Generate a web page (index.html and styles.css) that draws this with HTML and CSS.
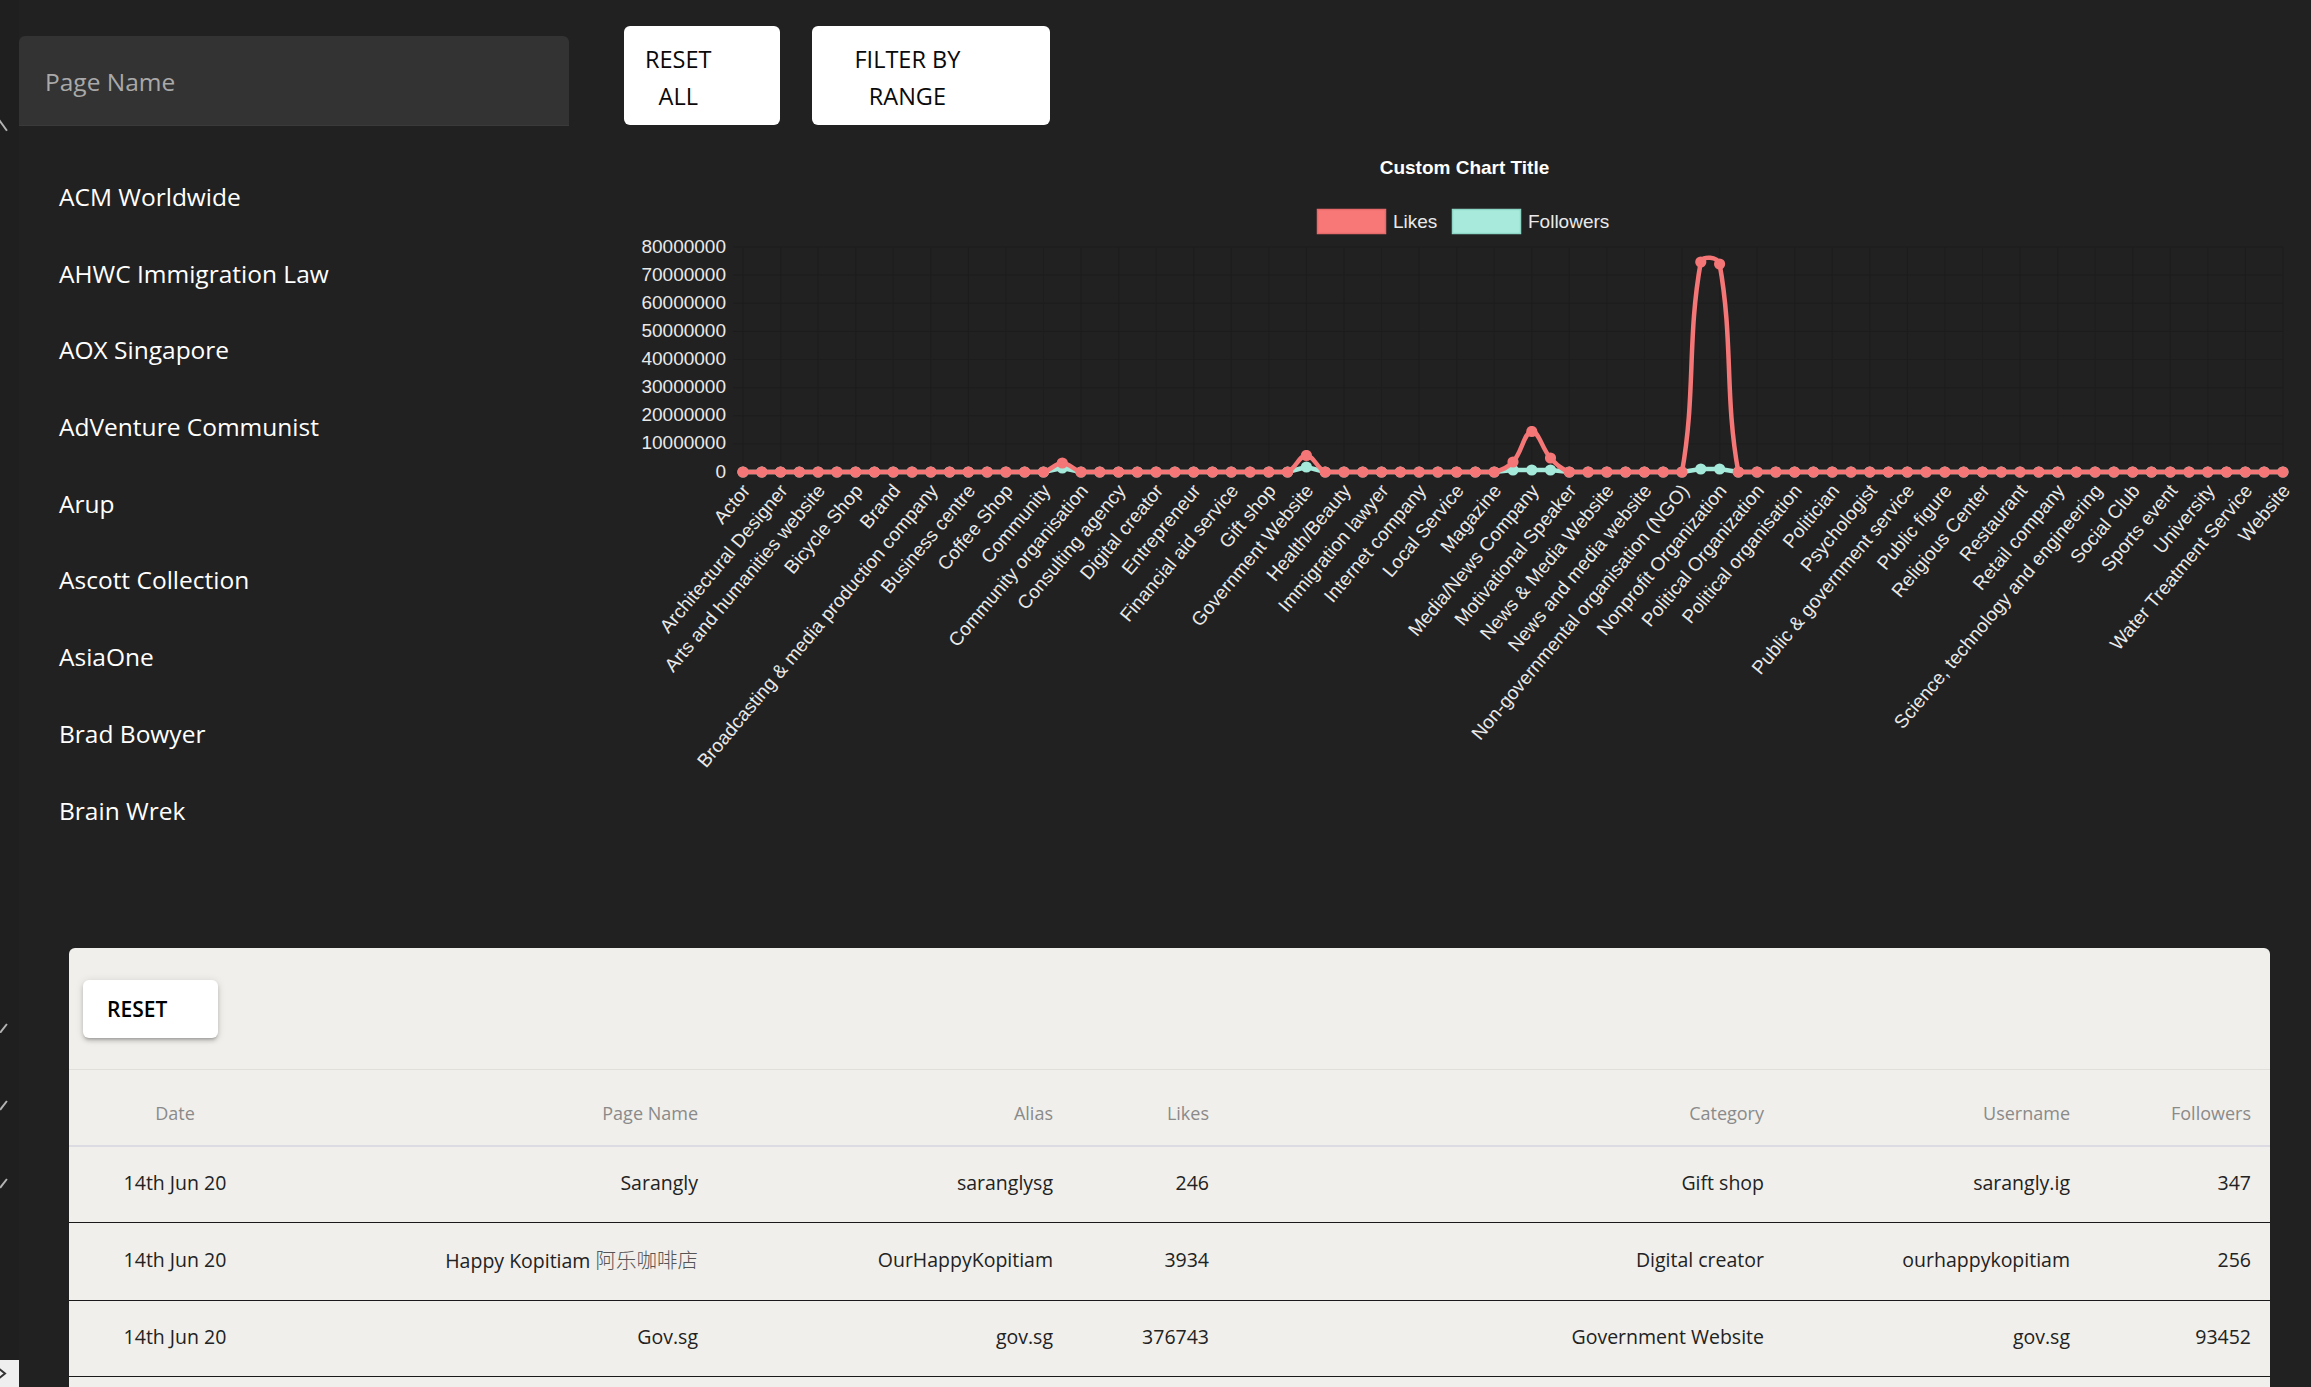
FILE: index.html
```html
<!DOCTYPE html>
<html lang="en">
<head>
<meta charset="utf-8">
<title>Pages dashboard</title>
<link rel="stylesheet" href="styles.css">
</head>
<body>
<div class="rail">
  <svg class="rail-up" viewBox="0 0 8 13"><path d="M-1 1 L7 12" /></svg>
  <svg class="rail-check rail-check-1" viewBox="0 0 8 11"><path d="M0 10 L7 1" /></svg>
  <svg class="rail-check" viewBox="0 0 8 11"><path d="M0 10 L7 1" /></svg>
  <svg class="rail-check" viewBox="0 0 8 11"><path d="M0 10 L7 1" /></svg>
  <div class="rail-square"><svg viewBox="0 0 19 27"><path d="M-2 8 L5 13.5 L-2 19" /></svg></div>
</div>

<div class="content">
  <div class="top">
    <aside class="sidebar">
      <div class="search">Page Name</div>
      <ul class="page-list">
        <li>ACM Worldwide</li>
        <li>AHWC Immigration Law</li>
        <li>AOX Singapore</li>
        <li>AdVenture Communist</li>
        <li>Arup</li>
        <li>Ascott Collection</li>
        <li>AsiaOne</li>
        <li>Brad Bowyer</li>
        <li>Brain Wrek</li>
      </ul>
    </aside>

    <main class="main">
      <div class="actions">
        <button class="btn btn-all"><span>RESET<br>ALL</span></button>
        <button class="btn btn-range"><span>FILTER BY<br>RANGE</span></button>
      </div>

      <svg class="chart" viewBox="624 125 1687 700" xmlns="http://www.w3.org/2000/svg">
        <defs>
          <marker id="dotR" viewBox="0 0 12 12" refX="6" refY="6" markerWidth="12" markerHeight="12" markerUnits="userSpaceOnUse">
            <circle cx="6" cy="6" r="5.6" class="dot-likes"/>
          </marker>
          <marker id="dotT" viewBox="0 0 12 12" refX="6" refY="6" markerWidth="12" markerHeight="12" markerUnits="userSpaceOnUse">
            <circle cx="6" cy="6" r="5.6" class="dot-followers"/>
          </marker>
        </defs>

        <text class="chart-title" x="1464.5" y="174">Custom Chart Title</text>

        <rect class="legend-likes" x="1317.5" y="209.5" width="68" height="24"/>
        <text class="legend-text" x="1393" y="221">Likes</text>
        <rect class="legend-followers" x="1452.5" y="209.5" width="68" height="24"/>
        <text class="legend-text" x="1528" y="221">Followers</text>

        <path class="grid" d="M733 247H2283M733 275.1H2283M733 303.25H2283M733 331.4H2283M733 359.5H2283M733 387.6H2283M733 415.75H2283M733 443.9H2283M733 472H2283
        M743 247V482M780.6 247V482M818.1 247V482M855.7 247V482M893.2 247V482M930.8 247V482M968.4 247V482M1005.9 247V482M1043.5 247V482M1081 247V482M1118.6 247V482M1156.2 247V482M1193.7 247V482M1231.3 247V482M1268.9 247V482M1306.4 247V482M1344 247V482M1381.5 247V482M1419.1 247V482M1456.7 247V482M1494.2 247V482M1531.8 247V482M1569.3 247V482M1606.9 247V482M1644.5 247V482M1682 247V482M1719.6 247V482M1757.1 247V482M1794.7 247V482M1832.3 247V482M1869.8 247V482M1907.4 247V482M1944.9 247V482M1982.5 247V482M2020.1 247V482M2057.6 247V482M2095.2 247V482M2132.7 247V482M2170.3 247V482M2207.9 247V482M2245.4 247V482M2283 247V482"/>

        <g class="y-ticks">
          <text x="726" y="246">80000000</text>
          <text x="726" y="274.1">70000000</text>
          <text x="726" y="302.25">60000000</text>
          <text x="726" y="330.4">50000000</text>
          <text x="726" y="358.5">40000000</text>
          <text x="726" y="386.6">30000000</text>
          <text x="726" y="414.75">20000000</text>
          <text x="726" y="442.9">10000000</text>
          <text x="726" y="471">0</text>
        </g>

        <g class="x-ticks">
          <text transform="translate(746 487) rotate(-50)">Actor</text>
          <text transform="translate(783.6 487) rotate(-50)">Architectural Designer</text>
          <text transform="translate(821.1 487) rotate(-50)">Arts and humanities website</text>
          <text transform="translate(858.7 487) rotate(-50)">Bicycle Shop</text>
          <text transform="translate(896.2 487) rotate(-50)">Brand</text>
          <text transform="translate(933.8 487) rotate(-50)">Broadcasting &amp; media production company</text>
          <text transform="translate(971.4 487) rotate(-50)">Business centre</text>
          <text transform="translate(1008.9 487) rotate(-50)">Coffee Shop</text>
          <text transform="translate(1046.5 487) rotate(-50)">Community</text>
          <text transform="translate(1084 487) rotate(-50)">Community organisation</text>
          <text transform="translate(1121.6 487) rotate(-50)">Consulting agency</text>
          <text transform="translate(1159.2 487) rotate(-50)">Digital creator</text>
          <text transform="translate(1196.7 487) rotate(-50)">Entrepreneur</text>
          <text transform="translate(1234.3 487) rotate(-50)">Financial aid service</text>
          <text transform="translate(1271.9 487) rotate(-50)">Gift shop</text>
          <text transform="translate(1309.4 487) rotate(-50)">Government Website</text>
          <text transform="translate(1347 487) rotate(-50)">Health/Beauty</text>
          <text transform="translate(1384.5 487) rotate(-50)">Immigration lawyer</text>
          <text transform="translate(1422.1 487) rotate(-50)">Internet company</text>
          <text transform="translate(1459.7 487) rotate(-50)">Local Service</text>
          <text transform="translate(1497.2 487) rotate(-50)">Magazine</text>
          <text transform="translate(1534.8 487) rotate(-50)">Media/News Company</text>
          <text transform="translate(1572.3 487) rotate(-50)">Motivational Speaker</text>
          <text transform="translate(1609.9 487) rotate(-50)">News &amp; Media Website</text>
          <text transform="translate(1647.5 487) rotate(-50)">News and media website</text>
          <text transform="translate(1685 487) rotate(-50)">Non-governmental organisation (NGO)</text>
          <text transform="translate(1722.6 487) rotate(-50)">Nonprofit Organization</text>
          <text transform="translate(1760.1 487) rotate(-50)">Political Organization</text>
          <text transform="translate(1797.7 487) rotate(-50)">Political organisation</text>
          <text transform="translate(1835.3 487) rotate(-50)">Politician</text>
          <text transform="translate(1872.8 487) rotate(-50)">Psychologist</text>
          <text transform="translate(1910.4 487) rotate(-50)">Public &amp; government service</text>
          <text transform="translate(1947.9 487) rotate(-50)">Public figure</text>
          <text transform="translate(1985.5 487) rotate(-50)">Religious Center</text>
          <text transform="translate(2023.1 487) rotate(-50)">Restaurant</text>
          <text transform="translate(2060.6 487) rotate(-50)">Retail company</text>
          <text transform="translate(2098.2 487) rotate(-50)">Science, technology and engineering</text>
          <text transform="translate(2135.7 487) rotate(-50)">Social Club</text>
          <text transform="translate(2173.3 487) rotate(-50)">Sports event</text>
          <text transform="translate(2210.9 487) rotate(-50)">University</text>
          <text transform="translate(2248.4 487) rotate(-50)">Water Treatment Service</text>
          <text transform="translate(2286 487) rotate(-50)">Website</text>
        </g>

        <path class="line-followers" d="M743 472h18.78h18.78h18.78h18.78h18.78h18.78h18.78h18.78h18.78h18.78h18.78h18.78h18.78h18.78h18.78h18.78L1062.3 468L1081 472h18.78h18.78h18.78h18.78h18.78h18.78h18.78h18.78h18.78h18.78h18.78L1306.4 467L1325.2 472h18.78h18.78h18.78h18.78h18.78h18.78h18.78h18.78h18.78L1513 470L1531.8 470L1550.5 470L1569.3 472h18.78h18.78h18.78h18.78h18.78h18.78L1700.8 469L1719.6 469L1738.3 472h18.78h18.78h18.78h18.78h18.78h18.78h18.78h18.78h18.78h18.78h18.78h18.78h18.78h18.78h18.78h18.78h18.78h18.78h18.78h18.78h18.78h18.78h18.78h18.78h18.78h18.78h18.78h18.78h18.78"/>

        <path class="line-likes" d="M743 472h18.78h18.78h18.78h18.78h18.78h18.78h18.78h18.78h18.78h18.78h18.78h18.78h18.78h18.78h18.78h18.78C1051.4 470.1 1054.8 463 1062.3 463C1069.8 463 1073.1 470.1 1081 472h18.78h18.78h18.78h18.78h18.78h18.78h18.78h18.78h18.78h18.78h18.78C1296.2 468.2 1298.9 455.5 1306.4 455.5C1313.9 455.5 1316.6 468.2 1325.2 472h18.78h18.78h18.78h18.78h18.78h18.78h18.78h18.78h18.78C1502.2 469.9 1507.4 468 1513 462C1522.4 451.8 1523.9 432.3 1531.8 431.5C1538.9 430.7 1541.8 448.6 1550.5 458C1556.8 464.8 1561 468.9 1569.3 472h18.78h18.78h18.78h18.78h18.78h18.78C1695.8 394.9 1687 338.3 1700.8 262C1702 255.2 1718.4 257 1719.6 264C1733.4 341 1724.5 395.7 1738.3 472h18.78h18.78h18.78h18.78h18.78h18.78h18.78h18.78h18.78h18.78h18.78h18.78h18.78h18.78h18.78h18.78h18.78h18.78h18.78h18.78h18.78h18.78h18.78h18.78h18.78h18.78h18.78h18.78h18.78"/>
      </svg>
    </main>
  </div>

  <section class="card">
    <div class="toolbar">
      <button class="btn-reset">RESET</button>
    </div>
    <table class="data">
      <colgroup>
        <col class="c-date"><col class="c-name"><col class="c-alias"><col class="c-likes"><col class="c-cat"><col class="c-user"><col class="c-fol">
      </colgroup>
      <thead>
        <tr>
          <th class="center">Date</th>
          <th>Page Name</th>
          <th>Alias</th>
          <th>Likes</th>
          <th>Category</th>
          <th>Username</th>
          <th>Followers</th>
        </tr>
      </thead>
      <tbody>
        <tr>
          <td class="center">14th Jun 20</td>
          <td>Sarangly</td>
          <td>saranglysg</td>
          <td>246</td>
          <td>Gift shop</td>
          <td>sarangly.ig</td>
          <td>347</td>
        </tr>
        <tr>
          <td class="center">14th Jun 20</td>
          <td>Happy Kopitiam <span class="cjk">阿乐咖啡店</span></td>
          <td>OurHappyKopitiam</td>
          <td>3934</td>
          <td>Digital creator</td>
          <td>ourhappykopitiam</td>
          <td>256</td>
        </tr>
        <tr>
          <td class="center">14th Jun 20</td>
          <td>Gov.sg</td>
          <td>gov.sg</td>
          <td>376743</td>
          <td>Government Website</td>
          <td>gov.sg</td>
          <td>93452</td>
        </tr>
      </tbody>
    </table>
  </section>
</div>
</body>
</html>
```

FILE: styles.css
```css
* {
  box-sizing: border-box;
}

html, body {
  margin: 0;
  padding: 0;
}

body {
  width: 2311px;
  height: 1387px;
  overflow: hidden;
  display: flex;
  background: #212121;
  font-family: "Open Sans", "Noto Sans", "Noto Sans CJK SC", sans-serif;
}

/* left edge rail with cut-off controls */
.rail {
  width: 19px;
  flex: none;
  display: flex;
  flex-direction: column;
  background: #1f1f1f;
}

.rail svg path {
  fill: none;
  stroke: #b4b4b4;
  stroke-width: 2;
}

.rail-up {
  display: block;
  width: 8px;
  height: 13px;
  margin-top: 119px;
}

.rail-check {
  display: block;
  width: 8px;
  height: 11px;
  margin-top: 67px;
}

.rail-check-1 {
  margin-top: 891px;
}

.rail-square {
  margin-top: 171px;
  width: 19px;
  height: 27px;
  background: #efefef;
}

.rail-square svg {
  display: block;
  width: 19px;
  height: 27px;
}

.rail .rail-square svg path {
  stroke: #333;
  stroke-width: 2;
}

.content {
  flex: 1;
  display: flex;
  flex-direction: column;
  min-width: 0;
}

.top {
  height: 948px;
  flex: none;
  display: flex;
}

/* sidebar */
.sidebar {
  width: 605px;
  flex: none;
  padding-top: 36px;
}

.search {
  width: 550px;
  height: 90px;
  background: #333333;
  border-radius: 6px 6px 0 0;
  border-bottom: 1px solid #3a3a3a;
  display: flex;
  align-items: center;
  padding: 2px 0 0 26px;
  color: #a9a9a9;
  font-size: 24.5px;
}

.page-list {
  list-style: none;
  margin: 33px 0 0;
  padding: 0 0 0 40px;
}

.page-list li {
  height: 76.7px;
  line-height: 76.7px;
  font-size: 24.5px;
  color: #ffffff;
  white-space: nowrap;
}

/* main panel */
.main {
  flex: 1;
  padding-top: 26px;
  min-width: 0;
}

.actions {
  display: flex;
  gap: 32px;
}

.btn {
  height: 99px;
  border: none;
  border-radius: 6px;
  background: #ffffff;
  color: #0a0a0a;
  font-family: "Open Sans", "Noto Sans", sans-serif;
  font-size: 23.5px;
  line-height: 37px;
  text-align: center;
  display: flex;
  align-items: center;
}

.btn span {
  display: block;
  margin-top: 4px;
}

.btn-all {
  padding: 0 69px 0 21px;
}

.btn-range {
  padding: 0 90px 0 42px;
}

/* chart */
.chart {
  display: block;
  width: 1687px;
  height: 700px;
}

.chart text {
  font-family: "Liberation Sans", Arial, sans-serif;
  font-size: 19px;
  fill: #e9e9e9;
}

.chart .chart-title {
  font-weight: bold;
  text-anchor: middle;
  fill: #ffffff;
}

.chart .legend-text {
  dominant-baseline: central;
}

.legend-likes {
  fill: #f87878;
  stroke: #e66a6a;
  stroke-width: 1.5;
}

.legend-followers {
  fill: #a8ebdc;
  stroke: #8dd6c6;
  stroke-width: 1.5;
}

.grid {
  fill: none;
  stroke: #1d1d1d;
  stroke-width: 1;
}

.y-ticks text {
  text-anchor: end;
  dominant-baseline: central;
}

.x-ticks text {
  text-anchor: end;
  dominant-baseline: central;
}

.line-likes {
  fill: none;
  stroke: #f57676;
  stroke-width: 4.5;
  stroke-linejoin: round;
  marker-start: url(#dotR);
  marker-mid: url(#dotR);
  marker-end: url(#dotR);
}

.line-followers {
  fill: none;
  stroke: #a4e9d9;
  stroke-width: 4.5;
  stroke-linejoin: round;
  marker-start: url(#dotT);
  marker-mid: url(#dotT);
  marker-end: url(#dotT);
}

.dot-likes {
  fill: #f57676;
}

.dot-followers {
  fill: #a4e9d9;
}

/* table card */
.card {
  flex: none;
  margin: 0 41px 0 50px;
  background: #f0efeb;
  border-radius: 6px 6px 0 0;
  flex-grow: 1;
}

.toolbar {
  padding: 32px 14px 31px;
  border-bottom: 1px solid #e0dfda;
}

.btn-reset {
  display: block;
  width: 135px;
  height: 58px;
  border: none;
  border-radius: 6px;
  background: #ffffff;
  box-shadow: 0 3px 3px -2px rgba(0, 0, 0, 0.2), 0 3px 4px 0 rgba(0, 0, 0, 0.14), 0 1px 8px 0 rgba(0, 0, 0, 0.12);
  padding: 0 0 0 24px;
  text-align: left;
  font-family: "Open Sans", "Noto Sans", sans-serif;
  font-size: 21px;
  font-weight: 600;
  color: #000;
}

.data {
  width: 100%;
  border-collapse: collapse;
  table-layout: fixed;
}

.c-date { width: 212px; }
.c-name { width: 436px; }
.c-alias { width: 355px; }
.c-likes { width: 156px; }
.c-cat { width: 555px; }
.c-user { width: 306px; }
.c-fol { width: 181px; }

.data th {
  padding: 31px 19px 20px;
  line-height: 24px;
  font-size: 18px;
  font-weight: 400;
  color: #8a8a8a;
  text-align: right;
  border-bottom: 2px solid #dcdbe3;
  white-space: nowrap;
}

.data td {
  padding: 24px 19px 27px;
  line-height: 24px;
  font-size: 19.5px;
  color: #222222;
  text-align: right;
  border-bottom: 1px solid #1a1a1a;
  white-space: nowrap;
}

.data .center {
  text-align: center;
}

.cjk {
  font-family: "Noto Sans CJK SC", sans-serif;
  font-size: 20.5px;
  color: #555555;
  font-weight: 300;
}
```
